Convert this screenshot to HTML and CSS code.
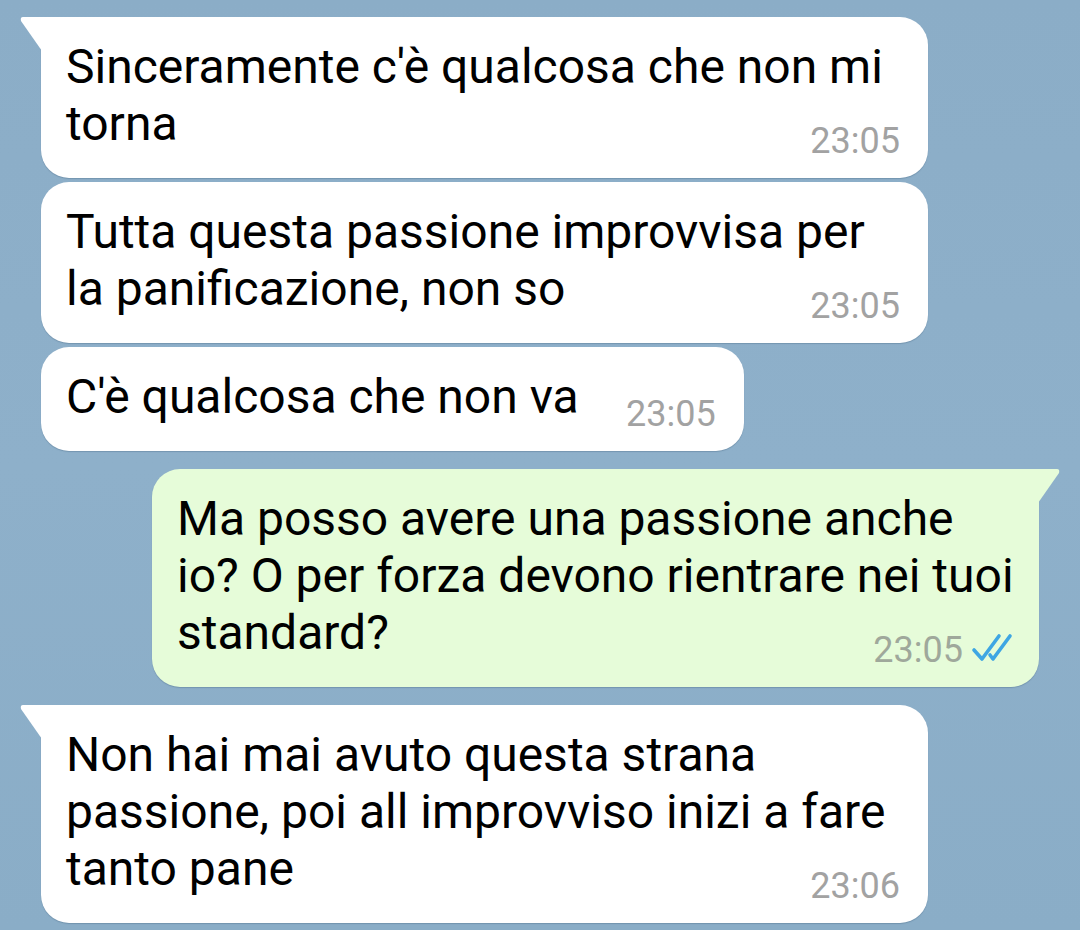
FILE: index.html
```html
<!DOCTYPE html>
<html lang="it">
<head>
    <meta charset="UTF-8">
    <meta name="viewport" content="width=device-width, initial-scale=1.0">
    <title>Chat</title>
    <link rel="stylesheet" href="styles.css">
</head>
<body>
    <div class="chat">
        <div class="msg in tail">
            <span class="text">Sinceramente c'è qualcosa che non mi torna</span><span class="spacer"></span>
            <span class="meta">23:05</span>
        </div>
        <div class="msg in">
            <span class="text">Tutta questa passione improvvisa per la panificazione, non so</span><span class="spacer"></span>
            <span class="meta">23:05</span>
        </div>
        <div class="msg in">
            <span class="text">C'è qualcosa che non va</span><span class="spacer"></span>
            <span class="meta">23:05</span>
        </div>

        <div class="msg out tail group">
            <span class="text">Ma posso avere una passione anche io? O per forza devono rientrare nei tuoi standard?</span><span class="spacer"></span>
            <span class="meta">23:05
                <svg class="checks" width="44" height="30" viewBox="0 0 44 30">
                    <path d="M3 18 L11 27 L28 4" fill="none" stroke="#3ea6e3" stroke-width="3.6" stroke-linecap="round" stroke-linejoin="round"/>
                    <path d="M19 23 L22 27 L39 4" fill="none" stroke="#3ea6e3" stroke-width="3.6" stroke-linecap="round" stroke-linejoin="round"/>
                </svg>
            </span>
        </div>

        <div class="msg in tail group">
            <span class="text">Non hai mai avuto questa strana passione, poi all improvviso inizi a fare tanto pane</span><span class="spacer"></span>
            <span class="meta">23:06</span>
        </div>
    </div>
</body>
</html>
```

FILE: styles.css
```css
/* Base */
html, body {
    margin: 0;
    height: 100%;
}

body {
    font-family: Roboto, "Noto Sans", Arial, sans-serif;
    background: linear-gradient(180deg, #8badc7 0%, #8eb0ca 50%, #8aadc7 100%);
    color: #000;
    overflow: hidden;
}

.chat {
    display: flex;
    flex-direction: column;
    gap: 4px;
    padding: 17px 41px 0 41px;
}

/* Bubbles */
.msg {
    position: relative;
    box-sizing: border-box;
    max-width: 887px;
    padding: 21px 28px 26px 25px;
    font-size: 48px;
    line-height: 57px;
    border-radius: 28px;
    box-shadow: 0 1px 1px rgba(40, 70, 100, 0.25);
}

.msg.group {
    margin-top: 14px;
}

.msg.in {
    align-self: flex-start;
    background: #fff;
}

.msg.out {
    align-self: flex-end;
    padding-right: 20px;
    background: #e6fcd9;
}

.msg.in.tail {
    border-top-left-radius: 0;
}

.msg.out.tail {
    border-top-right-radius: 0;
}

.msg.tail::before {
    content: "";
    position: absolute;
    top: 0;
    width: 22px;
    height: 34px;
    background: inherit;
}

.msg.in.tail::before {
    left: -21px;
    clip-path: path('M3 0 H22 V34 L1 4 Q0 0 3 0 Z');
}

.msg.out.tail::before {
    right: -21px;
    clip-path: path('M19 0 H0 V34 L21 4 Q22 0 19 0 Z');
}

.spacer {
    display: inline-block;
    width: 137px;
}

.msg.out .spacer {
    width: 190px;
}

/* Time + ticks */
.meta {
    position: absolute;
    right: 28px;
    bottom: 20px;
    display: flex;
    align-items: center;
    gap: 8px;
    font-size: 36px;
    line-height: 34px;
    color: #a2a2a2;
}

.msg.out .meta {
    right: 24px;
    color: #9fa89b;
}

.checks {
    display: block;
    margin-top: -6px;
}
```
